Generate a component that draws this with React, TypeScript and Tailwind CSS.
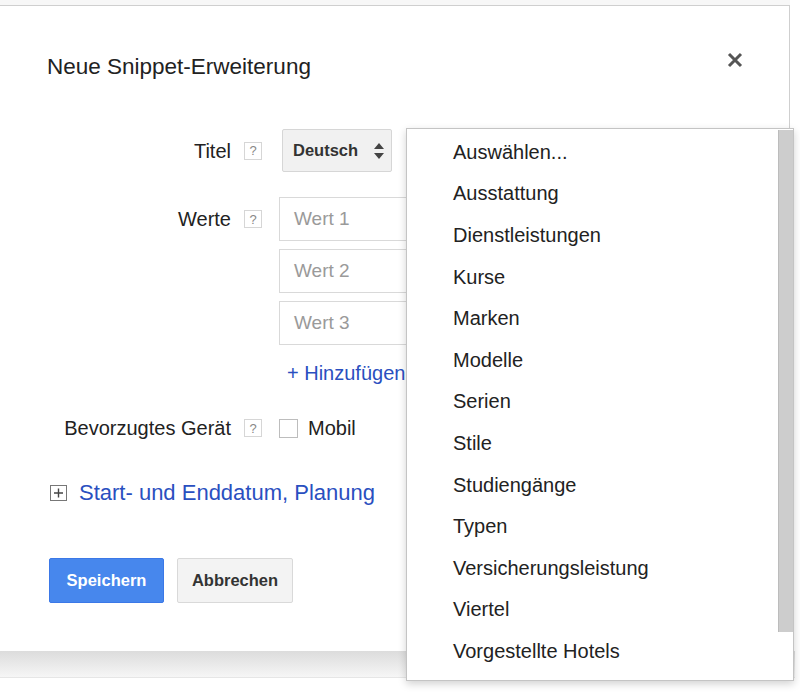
import React from "react";

const items = [
  "Auswählen...",
  "Ausstattung",
  "Dienstleistungen",
  "Kurse",
  "Marken",
  "Modelle",
  "Serien",
  "Stile",
  "Studiengänge",
  "Typen",
  "Versicherungsleistung",
  "Viertel",
  "Vorgestellte Hotels",
];

function Help() {
  return (
    <div className="ml-[13px] flex h-[18px] w-[18px] shrink-0 items-center justify-center border border-[#d6d6d6] text-[13px] leading-none text-[#888]">
      ?
    </div>
  );
}

function Label({ children }: { children: React.ReactNode }) {
  return <div className="w-[231px] shrink-0 text-right text-[20px] leading-[24px] text-[#222]">{children}</div>;
}

export default function App() {
  return (
    <div className="relative h-[695px] w-[800px] overflow-hidden bg-white font-['Liberation_Sans',Arial,sans-serif]">
      <div className="h-[5px] w-[790px] bg-[#f7f7f7]" />
      {/* dialog */}
      <div className="flex h-[646px] w-[790px] flex-col border-t border-r border-[#cfcfcf] bg-white">
        <div className="mt-[47px] flex h-[28px] items-center justify-between pl-[47px] pr-[46px]">
          <div className="text-[22.5px] leading-[28px] text-[#222]">Neue Snippet-Erweiterung</div>
          <svg width="16" height="16" viewBox="0 0 16 16" className="mt-[-14px]">
            <path d="M2 2 L14 14 M14 2 L2 14" stroke="#555" strokeWidth="3" strokeLinecap="butt" />
          </svg>
        </div>

        {/* Titel */}
        <div className="mt-[48px] flex h-[43px] items-center">
          <Label>Titel</Label>
          <Help />
          <div className="ml-[20px] flex h-[43px] w-[110px] items-center justify-between rounded-[2px] border border-[#d6d6d6] bg-[#f1f1f1] pl-[10px] pr-[7px]">
            <span className="text-[16.5px] font-bold text-[#333]">Deutsch</span>
            <svg width="10" height="18" viewBox="0 0 10 18">
              <path d="M5 1 L10 7 L0 7 Z M5 17 L10 11 L0 11 Z" fill="#444" />
            </svg>
          </div>
        </div>

        {/* Werte */}
        <div className="mt-[25px] flex items-start">
          <div className="flex h-[44px] items-center">
            <Label>Werte</Label>
            <Help />
          </div>
          <div className="ml-[17px] flex flex-col gap-[8px]">
            {["Wert 1", "Wert 2", "Wert 3"].map((w) => (
              <div key={w} className="flex h-[44px] w-[320px] items-center border border-[#d9d9d9] pl-[14px] text-[19px] text-[#9a9a9a]">
                {w}
              </div>
            ))}
            <div className="mt-[8px] h-[24px] pl-[8px] text-[20px] leading-[24px] text-[#2a4fc0]">+ Hinzufügen</div>
          </div>
        </div>

        {/* Gerät */}
        <div className="mt-[31px] flex h-[24px] items-center">
          <Label>Bevorzugtes Gerät</Label>
          <Help />
          <div className="ml-[17px] h-[19px] w-[19px] border border-[#bdbdbd] bg-white" />
          <span className="ml-[10px] text-[20px] leading-[24px] text-[#222]">Mobil</span>
        </div>

        {/* Start */}
        <div className="mt-[39px] flex h-[28px] items-center pl-[50px]">
          <svg width="18" height="17" viewBox="0 0 18 17">
            <rect x="0.5" y="0.5" width="16" height="15" fill="white" stroke="#777" />
            <path d="M4 8 H13 M8.5 3.5 V12.5" stroke="#444" strokeWidth="1.4" />
          </svg>
          <span className="ml-[11px] text-[22px] leading-[28px] text-[#2a4fc0]">Start- und Enddatum, Planung</span>
        </div>

        {/* Buttons */}
        <div className="mt-[51px] flex items-center pl-[49px]">
          <div className="flex h-[45px] w-[115px] items-center justify-center rounded-[2px] border border-[#3b78e7] bg-[#4787ed] text-[16.5px] font-bold text-white">
            Speichern
          </div>
          <div className="ml-[13px] flex h-[45px] w-[116px] items-center justify-center rounded-[2px] border border-[#d9d9d9] bg-[#f3f3f3] text-[16.5px] font-bold text-[#333]">
            Abbrechen
          </div>
        </div>
      </div>
      {/* shadow band */}
      <div className="h-[27px] w-[795px] border-b border-[#e6e6e6] bg-gradient-to-b from-[#dcdcdc] to-[#f6f6f6]" />

      {/* dropdown */}
      <div className="absolute left-[406px] top-[128px] h-[553px] w-[388px] border border-[#c4c4c4] bg-white pt-[2px] shadow-[0_3px_8px_rgba(0,0,0,0.18)]">
        {items.map((it) => (
          <div key={it} className="flex h-[41.6px] items-center pl-[46px] text-[20px] text-[#222]">
            {it}
          </div>
        ))}
        <div className="absolute right-0 top-[1px] h-[502px] w-[15px] border-l border-[#bcbcbc] bg-[#cdcdcd]" />
      </div>
    </div>
  );
}
